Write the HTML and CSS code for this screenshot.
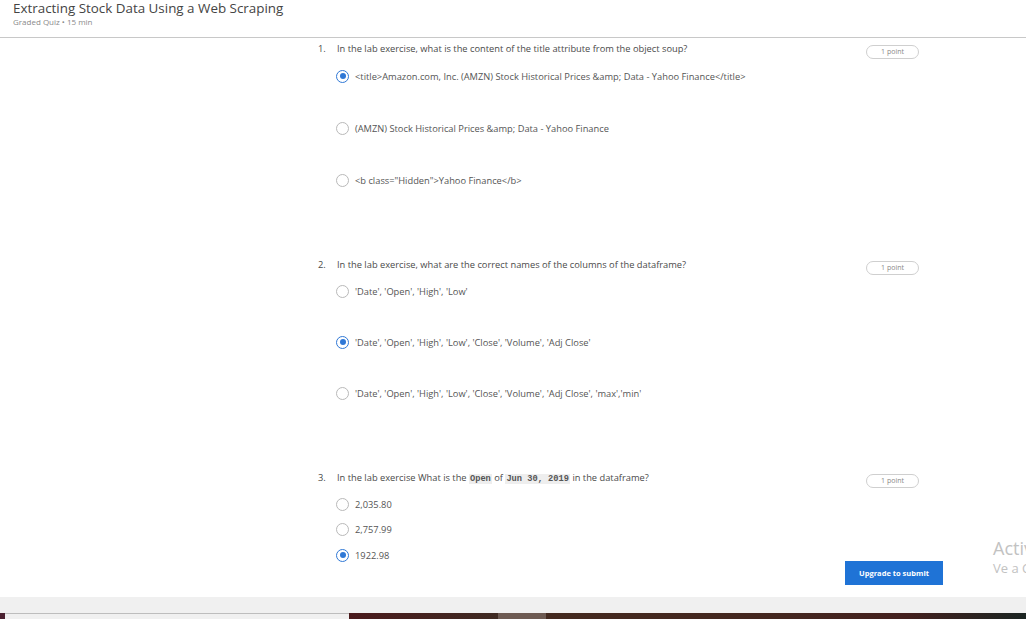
FILE: index.html
```html
<!DOCTYPE html>
<html lang="en">
<head>
<meta charset="utf-8">
<title>Extracting Stock Data Using a Web Scraping</title>
<link rel="stylesheet" href="styles.css">
</head>
<body>
<div class="page">
  <header class="header">
    <h1 class="title">Extracting Stock Data Using a Web Scraping</h1>
    <div class="subtitle">Graded Quiz • 15 min</div>
  </header>
  <main class="main">
    <div class="quiz">
      <section class="question">
        <div class="q-head">
          <span class="q-num">1.</span>
          <span class="q-text">In the lab exercise, what is the content of the title attribute from the object soup?</span>
          <span class="badge">1 point</span>
        </div>
        <ul class="options wide">
          <li class="option"><span class="radio checked"></span><span>&lt;title&gt;Amazon.com, Inc. (AMZN) Stock Historical Prices &amp;amp; Data - Yahoo Finance&lt;/title&gt;</span></li>
          <li class="option"><span class="radio"></span><span>(AMZN) Stock Historical Prices &amp;amp; Data - Yahoo Finance</span></li>
          <li class="option"><span class="radio"></span><span>&lt;b class="Hidden"&gt;Yahoo Finance&lt;/b&gt;</span></li>
        </ul>
      </section>
      <section class="question">
        <div class="q-head">
          <span class="q-num">2.</span>
          <span class="q-text">In the lab exercise, what are the correct names of the columns of the dataframe?</span>
          <span class="badge">1 point</span>
        </div>
        <ul class="options wide tight">
          <li class="option"><span class="radio"></span><span>'Date', 'Open', 'High', 'Low'</span></li>
          <li class="option"><span class="radio checked"></span><span>'Date', 'Open', 'High', 'Low', 'Close', 'Volume', 'Adj Close'</span></li>
          <li class="option"><span class="radio"></span><span>'Date', 'Open', 'High', 'Low', 'Close', 'Volume', 'Adj Close', 'max','min'</span></li>
        </ul>
      </section>
      <section class="question">
        <div class="q-head">
          <span class="q-num">3.</span>
          <span class="q-text">In the lab exercise What is the <code>Open</code> of <code>Jun 30, 2019</code> in the dataframe?</span>
          <span class="badge">1 point</span>
        </div>
        <ul class="options short">
          <li class="option"><span class="radio"></span><span>2,035.80</span></li>
          <li class="option"><span class="radio"></span><span>2,757.99</span></li>
          <li class="option"><span class="radio checked"></span><span>1922.98</span></li>
        </ul>
      </section>
    </div>
  </main>
  <footer class="footer">
    <button class="submit">Upgrade to submit</button>
  </footer>
  <div class="watermark">
    <div class="wm-big">Activate Windows</div>
    <div class="wm-small">Ve a Configuración para activar Windows.</div>
  </div>
</div>
<div class="chrome"></div>
<div class="taskbar">
  <span class="tb-a"></span>
  <span class="tb-b"></span>
  <span class="tb-c"></span>
  <span class="tb-d"></span>
  <span class="tb-e"></span>
</div>
</body>
</html>
```
FILE: styles.css
```css
* { box-sizing: border-box; }
html, body { margin: 0; padding: 0; }
body {
  width: 1026px;
  height: 619px;
  overflow: hidden;
  background: #fff;
  font-family: "Open Sans", "Liberation Sans", sans-serif;
  color: #555;
}
.page {
  position: relative;
  height: 597px;
  display: flex;
  flex-direction: column;
  overflow: hidden;
}
.header {
  height: 38px;
  padding: 0 0 0 13px;
  border-bottom: 1px solid #c8c8c8;
}
.title {
  margin: 0;
  font-size: 13.4px;
  font-weight: 400;
  line-height: 16px;
  color: #444;
}
.subtitle {
  font-size: 8px;
  line-height: 11px;
  color: #8a8a8a;
}
.main {
  flex: 1 1 0;
  min-height: 0;
  padding: 3px 0 0 318px;
}
.quiz { width: 601px; }
.question { margin-bottom: 70px; }
.q-head {
  display: flex;
  align-items: center;
  height: 14px;
  font-size: 9.3px;
  color: #4a4a4a;
}
.q-num { width: 19px; flex: none; }
.q-text { flex: 1; white-space: nowrap; }
.q-text code {
  font-family: "Liberation Mono", "DejaVu Sans Mono", monospace;
  font-weight: 700;
  font-size: 8.7px;
  background: #eeeeee;
  color: #555;
  padding: 0 1px;
}
.badge {
  flex: none;
  width: 53px;
  height: 14px;
  margin-top: 7px;
  border: 1px solid #cfcfcf;
  border-radius: 7px;
  font-size: 7px;
  line-height: 12px;
  text-align: center;
  color: #8a8a8a;
}
.options {
  list-style: none;
  margin: 14px 0 0 18px;
  padding: 0;
  display: flex;
  flex-direction: column;
}
.options.wide { gap: 38px; }
.options.wide.tight { margin-top: 13px; gap: 37px; }
.options.short { margin-top: 13px; gap: 11.5px; }
.option {
  display: flex;
  align-items: center;
  height: 14px;
  gap: 6px;
  font-size: 9.3px;
  color: #555;
  white-space: nowrap;
}
.radio {
  flex: none;
  width: 13px;
  height: 13px;
  border: 1.3px solid #b9b9b9;
  border-radius: 50%;
  display: flex;
  align-items: center;
  justify-content: center;
}
.radio.checked { border: 1.6px solid #2f78d6; }
.radio.checked::after {
  content: "";
  width: 6px;
  height: 6px;
  border-radius: 50%;
  background: #2f78d6;
}
.footer {
  display: flex;
  justify-content: flex-end;
  padding: 0 83px 12px 0;
}
.submit {
  width: 98px;
  height: 24px;
  border: none;
  background: #1f73d6;
  color: #fff;
  font-family: "Open Sans", "Liberation Sans", sans-serif;
  font-weight: 700;
  font-size: 7.5px;
  padding: 0;
}
.watermark {
  position: absolute;
  left: 993px;
  top: 537px;
  white-space: nowrap;
  color: #c2c2c2;
  font-family: "Open Sans", "Liberation Sans", sans-serif;
}
.wm-big { font-size: 18px; line-height: 22px; }
.wm-small { font-size: 13px; line-height: 18px; }
.chrome {
  height: 16px;
  background: #f0f0f0;
}
.taskbar {
  display: flex;
  height: 6px;
}
.taskbar span { display: block; height: 6px; }
.tb-a { width: 5px; background: #4a2030; }
.tb-b { width: 344px; background: #f0f0f0; border-top: 1px solid #bdbdbd; }
.tb-c { width: 149px; background: linear-gradient(90deg, #4a1a1c, #3f2a22); }
.tb-d { width: 48px; background: #6d5a52; }
.tb-e { flex: 1; background: linear-gradient(90deg, #43291f 0%, #43261f 50%, #43201e 75%, #1b2522 100%); }
```
